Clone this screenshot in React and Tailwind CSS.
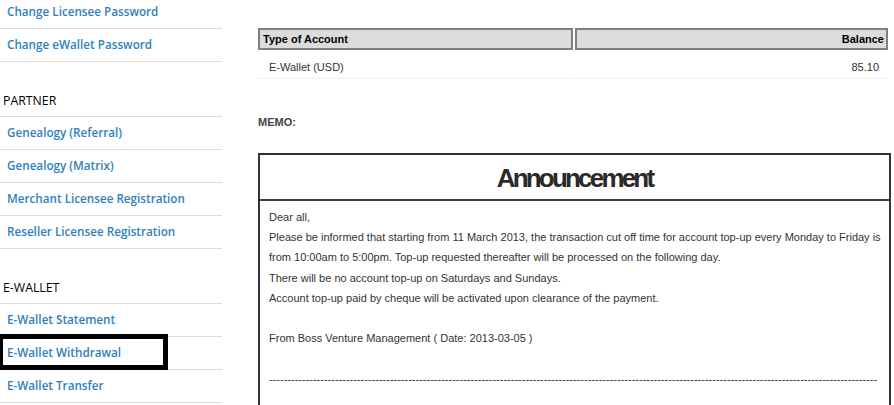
import React from "react";

const linkCls =
  "h-[33px] border-b border-[#dddddd] pl-[7px] flex items-center text-[11.7px] font-semibold text-[#2f7fc0] whitespace-nowrap";
const headCls =
  "h-[55px] border-b border-[#dddddd] pl-[3px] pt-[31px] text-[12.3px] leading-[16px] text-black uppercase";

function Item({ children, boxed }) {
  return (
    <div className={linkCls + " relative"}>
      <span>{children}</span>
      {boxed && (
        <div className="absolute left-[-2px] top-[-3px] w-[170px] h-[36px] border-[5px] border-black" />
      )}
    </div>
  );
}

export default function App() {
  const body = "font-['Liberation_Sans',Arial,sans-serif]";
  return (
    <div className="w-[894px] h-[405px] overflow-hidden bg-white flex">
      <div className="w-[222px] shrink-0 mt-[-4px] font-['Open_Sans',sans-serif]">
        <Item>Change Licensee Password</Item>
        <Item>Change eWallet Password</Item>
        <div className={headCls}>PARTNER</div>
        <Item>Genealogy (Referral)</Item>
        <Item>Genealogy (Matrix)</Item>
        <Item>Merchant Licensee Registration</Item>
        <Item>Reseller Licensee Registration</Item>
        <div className={headCls}>E-WALLET</div>
        <Item>E-Wallet Statement</Item>
        <Item boxed>E-Wallet Withdrawal</Item>
        <Item>E-Wallet Transfer</Item>
      </div>

      <div className={"ml-[36px] w-[633px] shrink-0 pt-[28px] text-[11px] text-[#333] " + body}>
        <div className="w-[630px]">
          <div className="flex gap-[2px]">
            <div className="w-[315px] h-[22px] border-2 border-[#808080] bg-[#dcdcdc] pl-[3px] flex items-center font-bold text-black">
              Type of Account
            </div>
            <div className="flex-1 h-[22px] border-2 border-[#808080] bg-[#dcdcdc] pr-[2px] flex items-center justify-end font-bold text-black">
              Balance
            </div>
          </div>
          <div className="flex gap-[2px] mt-[2px]">
            <div className="w-[315px] border-b border-[#eeeeee] pl-[11px] pt-[8px] pb-[4px] leading-[14px]">
              E-Wallet (USD)
            </div>
            <div className="flex-1 border-b border-[#eeeeee] pr-[9px] pt-[8px] pb-[4px] leading-[14px] text-right">
              85.10
            </div>
          </div>
        </div>

        <div className="mt-[36px] leading-[14px] font-bold text-[#444]">MEMO:</div>

        <div className="mt-[24px] border-2 border-[#333] h-[300px]">
          <div className="h-[46px] flex items-center justify-center border-b-2 border-[#3c3c3c]">
            <span className="text-[26px] font-bold tracking-[-2.8px] text-[#2a2a2a] leading-none mt-[1px]">
              Announcement
            </span>
          </div>
          <div className="pl-[9px] pr-[9px] pt-[6px] leading-[20.2px] whitespace-nowrap">
            <div>Dear all,</div>
            <div>
              Please be informed that starting from 11 March 2013, the transaction cut off time for account top-up every Monday to Friday is
            </div>
            <div>from 10:00am to 5:00pm. Top-up requested thereafter will be processed on the following day.</div>
            <div>There will be no account top-up on Saturdays and Sundays.</div>
            <div>Account top-up paid by cheque will be activated upon clearance of the payment.</div>
            <div className="h-[20px]" />
            <div>From Boss Venture Management ( Date: 2013-03-05 )</div>
            <div className="h-[20px]" />
            <div className="mt-[1px]">{"-".repeat(166)}</div>
          </div>
        </div>
      </div>
    </div>
  );
}
